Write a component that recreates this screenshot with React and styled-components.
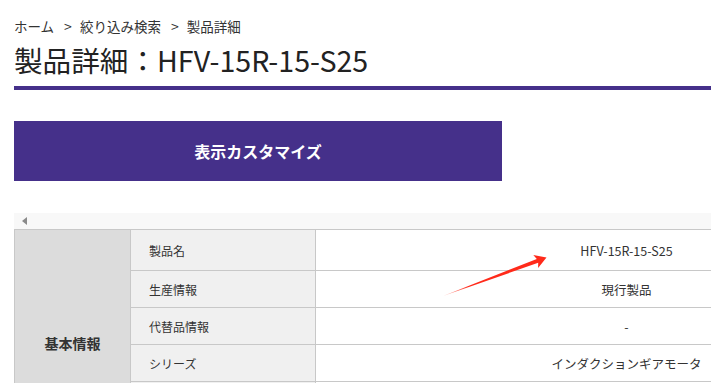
import React from "react";
import styled, { createGlobalStyle } from "styled-components";

const Global = createGlobalStyle`
  html, body { margin: 0; padding: 0; overflow: hidden; background: #fff; }
  body { font-family: "Noto Sans CJK JP", "Noto Sans", sans-serif; color: #333; }
  * { box-sizing: border-box; }
`;

const Page = styled.div`
  position: relative;
  width: 711px;
  padding-left: 14px;
  padding-top: 16px;
`;

const Breadcrumb = styled.nav`
  display: flex;
  align-items: center;
  height: 20px;
  font-size: 13.5px;
  line-height: 20px;
  color: #333;
`;

const Sep = styled.span`
  margin: 0 8px 0 10px;
  font-size: 14px;
`;

const Title = styled.h1`
  margin: 4px 0 0;
  height: 46px;
  font-size: 28.6px;
  font-weight: 400;
  line-height: 40px;
  color: #222;
  border-bottom: 4px solid #45308a;
  box-sizing: content-box;
`;

const CustomizeButton = styled.button`
  display: flex;
  align-items: center;
  justify-content: center;
  margin-top: 31px;
  width: 488px;
  height: 60px;
  border: none;
  background: #45308a;
  color: #fff;
  font-family: inherit;
  font-size: 16px;
  font-weight: 700;
  cursor: pointer;
`;

const ScrollBar = styled.div`
  display: flex;
  align-items: center;
  margin-top: 32px;
  height: 16px;
  background: #f8f8f8;
  padding-left: 8px;
`;

const LeftArrow = styled.span`
  width: 0;
  height: 0;
  border-top: 4px solid transparent;
  border-bottom: 4px solid transparent;
  border-right: 5px solid #8a8a8a;
`;

const TableViewport = styled.div`
  overflow: hidden;
  width: 697px;
`;

const Table = styled.table`
  width: 923px;
  border-collapse: collapse;
  table-layout: fixed;
  font-size: 12px;
`;

const GroupCell = styled.th`
  background: #dcdcdc;
  border: 1px solid #c8c8c8;
  font-size: 14px;
  font-weight: 700;
  color: #333;
  text-align: center;
  vertical-align: middle;
`;

const LabelCell = styled.td`
  height: ${(p) => (p.$first ? 41 : 37)}px;
  background: #f0f0f0;
  border: 1px solid #c8c8c8;
  padding-left: 18px;
  color: #333;
`;

const ValueCell = styled.td`
  background: #fff;
  border: 1px solid #c8c8c8;
  border-right: none;
  text-align: center;
  font-size: 12.5px;
  color: #333;
`;

const Arrow = styled.svg`
  position: absolute;
  left: 430px;
  top: 245px;
  width: 130px;
  height: 60px;
  pointer-events: none;
`;

const rows = [
  ["製品名", "HFV-15R-15-S25"],
  ["生産情報", "現行製品"],
  ["代替品情報", "-"],
  ["シリーズ", "インダクションギアモータ"],
  ["品番", "HFV-15R-15-S25"],
  ["形式", "-"],
];

export default function App() {
  return (
    <Page>
      <Global />
      <Breadcrumb>
        <span>ホーム</span>
        <Sep>&gt;</Sep>
        <span>絞り込み検索</span>
        <Sep>&gt;</Sep>
        <span>製品詳細</span>
      </Breadcrumb>
      <Title>製品詳細：HFV-15R-15-S25</Title>
      <CustomizeButton>表示カスタマイズ</CustomizeButton>
      <ScrollBar>
        <LeftArrow />
      </ScrollBar>
      <TableViewport>
        <Table>
          <colgroup>
            <col style={{ width: 116 }} />
            <col style={{ width: 185 }} />
            <col />
          </colgroup>
          <tbody>
            {rows.map(([label, value], i) => (
              <tr key={label}>
                {i === 0 && <GroupCell rowSpan={rows.length}>基本情報</GroupCell>}
                <LabelCell $first={i === 0}>{label}</LabelCell>
                <ValueCell>{value}</ValueCell>
              </tr>
            ))}
          </tbody>
        </Table>
      </TableViewport>
      <Arrow viewBox="0 0 130 60">
        <defs>
          <linearGradient id="arrowFade" x1="13" y1="51" x2="116" y2="13" gradientUnits="userSpaceOnUse">
            <stop offset="0" stopColor="#ff6a5a" stopOpacity="0.5" />
            <stop offset="0.25" stopColor="#ff2a1a" />
            <stop offset="1" stopColor="#ff2a1a" />
          </linearGradient>
        </defs>
        <polygon
          points="13,51 106.8,14 103.3,10 116.5,12.6 108.1,23.1 108.2,17.8"
          fill="url(#arrowFade)"
        />
      </Arrow>
    </Page>
  );
}
